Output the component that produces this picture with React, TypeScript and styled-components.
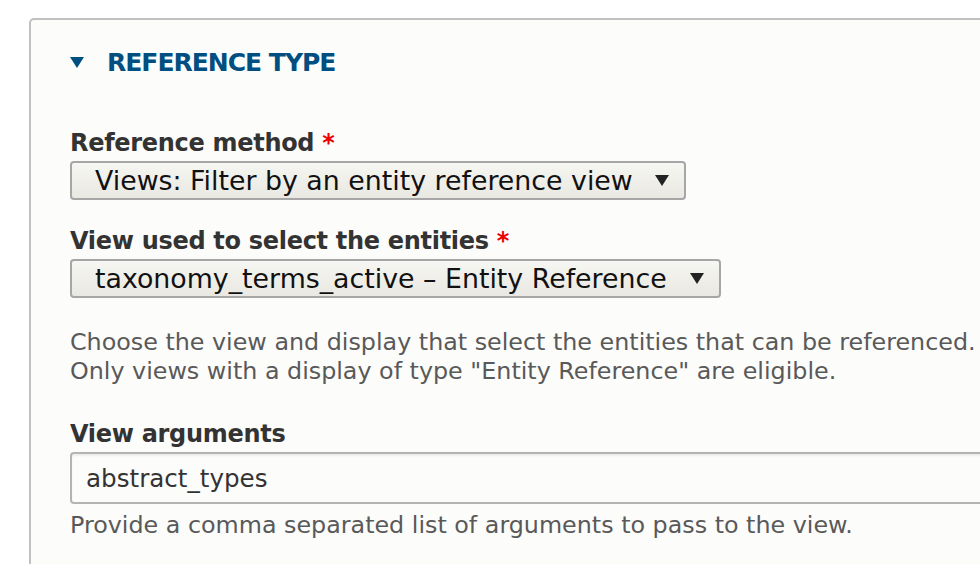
import styled, { createGlobalStyle } from 'styled-components';

const GlobalStyle = createGlobalStyle`
  html, body {
    margin: 0;
    padding: 0;
    background: #ffffff;
    overflow: hidden;
  }
  body {
    font-family: "DejaVu Sans", "Noto Sans", sans-serif;
    color: #333333;
  }
`;

export default function App() {
    return (
        <>
            <GlobalStyle />
            <Page>
                <Fieldset>
                    <Summary>
                        <Caret />
                        <SummaryTitle>Reference type</SummaryTitle>
                    </Summary>

                    <FieldItem>
                        <Label>Reference method <Required>*</Required></Label>
                        <Select $width={616}>
                            <span>Views: Filter by an entity reference view</span>
                            <SelectArrow />
                        </Select>
                    </FieldItem>

                    <FieldItem>
                        <Label>View used to select the entities <Required>*</Required></Label>
                        <Select $width={651}>
                            <span>taxonomy_terms_active – Entity Reference</span>
                            <SelectArrow />
                        </Select>
                        <Description>
                            Choose the view and display that select the entities that can be referenced.<br />
                            Only views with a display of type "Entity Reference" are eligible.
                        </Description>
                    </FieldItem>

                    <FieldItem>
                        <Label>View arguments</Label>
                        <TextInput>abstract_types</TextInput>
                        <Description>Provide a comma separated list of arguments to pass to the view.</Description>
                    </FieldItem>
                </Fieldset>
            </Page>
        </>
    );
}

const Page = styled.div`
    padding: 18px 0 0 29px;
    width: 980px;
    height: 564px;
    box-sizing: border-box;
    overflow: hidden;
`;

const Fieldset = styled.section`
    width: 1000px;
    min-height: 600px;
    box-sizing: border-box;
    background: #fcfcfa;
    border: 2px solid #c0c0c0;
    border-radius: 5px 0 0 0;
    padding: 0 0 0 39px;
`;

const Summary = styled.div`
    display: flex;
    align-items: center;
    gap: 23px;
    height: 80px;
    padding-top: 2px;
    color: #004f80;
`;

const Caret = styled.span`
    width: 0;
    height: 0;
    border-left: 7px solid transparent;
    border-right: 7px solid transparent;
    border-top: 11px solid #004f80;
`;

const SummaryTitle = styled.h2`
    margin: 0;
    font-size: 25px;
    font-weight: 700;
    text-transform: uppercase;
    letter-spacing: -1px;
    color: #004f80;
`;

const FieldItem = styled.div`
    margin-top: 25px;
    &:first-of-type {
        margin-top: 0;
    }
`;

const Label = styled.label`
    display: block;
    margin-bottom: 2px;
    font-size: 24px;
    font-weight: 700;
    line-height: 32px;
    letter-spacing: -0.3px;
    color: #333333;
`;

const Required = styled.span`
    color: #e00;
`;

const Select = styled.div<{ $width: number }>`
    display: flex;
    align-items: center;
    justify-content: space-between;
    box-sizing: border-box;
    width: ${(p) => p.$width}px;
    height: 39px;
    padding: 0 15px 0 23px;
    border: 2px solid #a6a6a6;
    border-radius: 4px;
    background: linear-gradient(#f6f6f2, #e9e8e2);
    font-size: 26.8px;
    color: #111111;
    white-space: nowrap;
`;

const SelectArrow = styled.span`
    width: 0;
    height: 0;
    border-left: 7px solid transparent;
    border-right: 7px solid transparent;
    border-top: 11px solid #222;
`;

const Description = styled.div`
    margin-top: 30px;
    padding-bottom: 7px;
    font-size: 23.8px;
    line-height: 29px;
    color: #595959;
    white-space: nowrap;
`;

const TextInput = styled.div`
    box-sizing: border-box;
    width: 1000px;
    height: 52px;
    display: flex;
    align-items: center;
    padding: 0 14px;
    border: 2px solid #b4b4b4;
    border-radius: 4px;
    background: #fcfcfa;
    box-shadow: inset 0 2px 2px rgba(0, 0, 0, 0.06);
    font-size: 24.6px;
    color: #333;
    & + ${Description} {
        margin-top: 7px;
    }
`;
